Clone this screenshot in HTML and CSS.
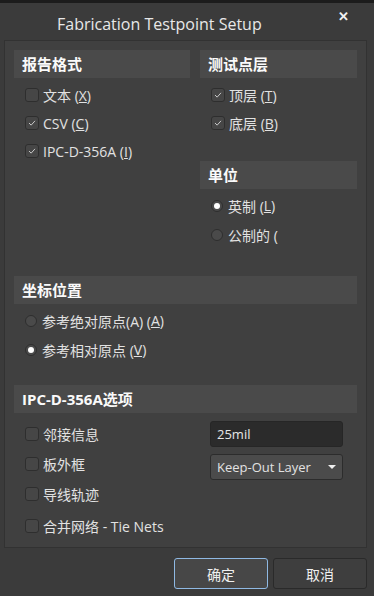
FILE: index.html
```html
<!DOCTYPE html>
<html lang="zh">
<head>
  <meta charset="UTF-8">
  <title>Fabrication Testpoint Setup</title>
  <link rel="stylesheet" href="styles.css">
</head>
<body>
  <div class="dialog">
    <div class="titlebar">
      <span class="title">Fabrication Testpoint Setup</span>
      <span class="close">&#x2715;</span>
    </div>

    <div class="panel">
      <div class="top">
        <div class="col">
          <div class="group-head">报告格式</div>
          <div class="rows">
            <label class="row"><span class="check"></span>文本 (<u>X</u>)</label>
            <label class="row"><span class="check on"><svg viewBox="0 0 14 14"><polyline points="3.5,7 6,9.5 10.5,4.5"/></svg></span>CSV (<u>C</u>)</label>
            <label class="row"><span class="check on"><svg viewBox="0 0 14 14"><polyline points="3.5,7 6,9.5 10.5,4.5"/></svg></span>IPC-D-356A (<u>I</u>)</label>
          </div>
        </div>
        <div class="col">
          <div class="group-head">测试点层</div>
          <div class="rows">
            <label class="row"><span class="check on"><svg viewBox="0 0 14 14"><polyline points="3.5,7 6,9.5 10.5,4.5"/></svg></span>顶层 (<u>T</u>)</label>
            <label class="row"><span class="check on"><svg viewBox="0 0 14 14"><polyline points="3.5,7 6,9.5 10.5,4.5"/></svg></span>底层 (<u>B</u>)</label>
          </div>
          <div class="group-head unit-head">单位</div>
          <div class="rows radios">
            <label class="row"><span class="radio on"></span>英制 (<u>L</u>)</label>
            <label class="row"><span class="radio"></span>公制的 (</label>
          </div>
        </div>
      </div>

      <div class="section coord">
        <div class="group-head">坐标位置</div>
        <div class="rows radios">
          <label class="row"><span class="radio"></span>参考绝对原点(A) (<u>A</u>)</label>
          <label class="row"><span class="radio on"></span>参考相对原点 (<u>V</u>)</label>
        </div>
      </div>

      <div class="section ipc">
        <div class="group-head">IPC-D-356A选项</div>
        <div class="ipc-body">
          <div class="ipc-rows">
            <label class="row"><span class="check"></span>邻接信息</label>
            <label class="row"><span class="check"></span>板外框</label>
            <label class="row"><span class="check"></span>导线轨迹</label>
            <label class="row last"><span class="check"></span>合并网络 - Tie Nets</label>
          </div>
          <div class="ipc-fields">
            <div class="field">25mil</div>
            <div class="select">Keep-Out Layer<span class="arrow"></span></div>
          </div>
        </div>
      </div>
    </div>

    <div class="buttons">
      <button class="btn btn-default">确定</button>
      <button class="btn">取消</button>
    </div>
  </div>
</body>
</html>
```

FILE: styles.css
```css
body {
  margin: 0;
  background-color: #3b3b3b;
  font-family: "Open Sans", "Noto Sans CJK SC", sans-serif;
  font-size: 14px;
  color: #e2e2e2;
}
.dialog {
  width: 374px;
  height: 596px;
  box-sizing: border-box;
  border-top: 3px solid #1c1c1c;
}
.titlebar {
  height: 37px;
  display: flex;
  align-items: center;
  position: relative;
  padding-left: 57px;
}
.title {
  font-size: 16px;
  color: #e8e8e8;
  padding-top: 4px;
}
.close {
  position: absolute;
  left: 338px;
  top: 4px;
  font-size: 13px;
  font-weight: bold;
  color: #f2f2f2;
}
.panel {
  margin-left: 4px;
  width: 363px;
  height: 508px;
  box-sizing: border-box;
  border: 1px solid #323232;
  background-color: #404040;
  padding: 9px 9px 0 9px;
}
.top {
  display: grid;
  grid-template-columns: 176px 157px;
  column-gap: 10px;
}
.group-head {
  height: 28px;
  line-height: 28px;
  background-color: #4a4a4a;
  padding-left: 8px;
  font-size: 15px;
  font-weight: bold;
  color: #fafafa;
}
.rows {
  display: flex;
  flex-direction: column;
  margin-top: 3px;
  padding-left: 11px;
}
.row {
  height: 28px;
  display: flex;
  align-items: center;
  white-space: nowrap;
}
.radios {
  margin-top: 2px;
}
.radios .row {
  height: 29px;
}
.unit-head {
  margin-top: 24px;
}
.check {
  width: 14px;
  height: 14px;
  box-sizing: border-box;
  border: 1px solid #2e2e2e;
  border-radius: 3px;
  background-color: #464646;
  margin-right: 4px;
  display: flex;
}
.check svg {
  width: 12px;
  height: 12px;
  fill: none;
  stroke: #cfcfcf;
  stroke-width: 1.1;
}
.radio {
  width: 12px;
  height: 12px;
  box-sizing: border-box;
  border: 1px solid #2e2e2e;
  border-radius: 50%;
  background-color: #4a4a4a;
  margin-right: 5px;
  position: relative;
}
.radio.on::after {
  content: "";
  position: absolute;
  left: 2px;
  top: 2px;
  width: 6px;
  height: 6px;
  border-radius: 50%;
  background-color: #ffffff;
}
.coord {
  margin-top: 27px;
}
.ipc {
  margin-top: 21px;
}
.ipc-body {
  display: grid;
  grid-template-columns: 196px 133px;
  margin-top: 6px;
}
.ipc-rows {
  display: flex;
  flex-direction: column;
  padding-left: 11px;
}
.ipc-rows .row {
  height: 30px;
}
.ipc-rows .row.last {
  margin-top: 2px;
}
.field {
  margin-top: 2px;
  height: 26px;
  box-sizing: border-box;
  border: 1px solid #262626;
  border-radius: 3px;
  background-color: #2b2b2b;
  padding-left: 6px;
  line-height: 24px;
  font-size: 13px;
  color: #e6e6e6;
}
.select {
  margin-top: 7px;
  height: 26px;
  box-sizing: border-box;
  border: 1px solid #2c2c2c;
  border-radius: 3px;
  background-color: #4b4b4b;
  padding-left: 6px;
  line-height: 24px;
  font-size: 13px;
  position: relative;
}
.arrow {
  position: absolute;
  right: 6px;
  top: 10px;
  border-left: 4px solid transparent;
  border-right: 4px solid transparent;
  border-top: 4px solid #f0f0f0;
}
.buttons {
  display: flex;
  justify-content: flex-end;
  gap: 5px;
  padding-right: 7px;
  margin-top: 10px;
}
.btn {
  width: 94px;
  height: 31px;
  border: 1px solid #2a2a2a;
  border-radius: 3px;
  background-color: #3e3e3e;
  color: #f0f0f0;
  font-family: "Open Sans", "Noto Sans CJK SC", sans-serif;
  font-size: 14px;
}
.btn-default {
  border-color: #8fb9e3;
  background-color: #474747;
}
```
